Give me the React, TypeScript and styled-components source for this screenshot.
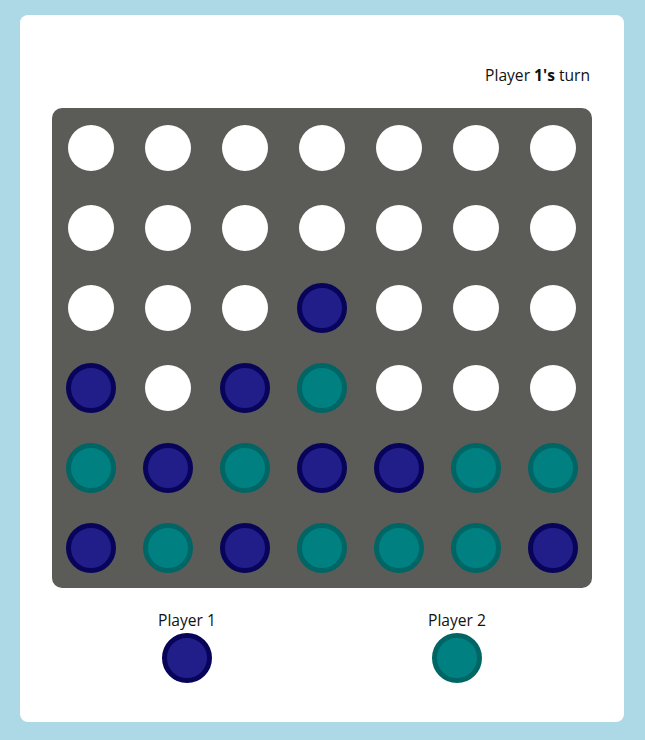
import React from "react";
import styled, { createGlobalStyle } from "styled-components";

const Global = createGlobalStyle`
  html, body { margin: 0; padding: 0; }
  body {
    background: #add8e6;
    font-family: "Open Sans", "Noto Sans", sans-serif;
    color: #111;
  }
`;

const Page = styled.div`
  padding: 15px 21px 18px 20px;
`;

const Card = styled.div`
  width: 604px;
  box-sizing: border-box;
  background: #fff;
  border-radius: 8px;
  padding: 48px 32px 39px;
`;

const Header = styled.div`
  display: flex;
  justify-content: flex-end;
  height: 24px;
  line-height: 24px;
  font-size: 15.6px;
  margin-bottom: 21px;
  padding-right: 2px;
`;

const Bold = styled.b`
  font-weight: 700;
`;

const Board = styled.div`
  width: 540px;
  height: 480px;
  background: #5b5b57;
  border-radius: 10px;
  display: grid;
  grid-template-columns: repeat(7, 1fr);
  grid-template-rows: repeat(6, 1fr);
  place-items: center;
`;

type Kind = "e" | "n" | "t";

const Disc = styled.div<{ $kind: Kind }>`
  box-sizing: border-box;
  border-radius: 50%;
  width: ${(p) => (p.$kind === "e" ? "46px" : "50px")};
  height: ${(p) => (p.$kind === "e" ? "46px" : "50px")};
  background: ${(p) =>
    p.$kind === "e" ? "#ffffff" : p.$kind === "n" ? "#211e8a" : "#008080"};
  border: ${(p) =>
    p.$kind === "e"
      ? "none"
      : p.$kind === "n"
      ? "5px solid #07045a"
      : "5px solid #006565"};
`;

const Players = styled.div`
  width: 540px;
  display: flex;
  justify-content: space-around;
  margin-top: 20px;
`;

const PlayerCol = styled.div`
  width: 270px;
  display: flex;
  flex-direction: column;
  align-items: center;
`;

const PlayerName = styled.div`
  font-size: 15.6px;
  line-height: 24px;
  height: 24px;
  margin-bottom: 1px;
`;

const rows: Kind[][] = [
  ["e", "e", "e", "e", "e", "e", "e"],
  ["e", "e", "e", "e", "e", "e", "e"],
  ["e", "e", "e", "n", "e", "e", "e"],
  ["n", "e", "n", "t", "e", "e", "e"],
  ["t", "n", "t", "n", "n", "t", "t"],
  ["n", "t", "n", "t", "t", "t", "n"],
];

export default function App() {
  return (
    <>
      <Global />
      <Page>
        <Card>
          <Header>
            <span>
              Player <Bold>1's</Bold> turn
            </span>
          </Header>
          <Board>
            {rows.flatMap((row, r) =>
              row.map((k, c) => <Disc key={`${r}-${c}`} $kind={k} />)
            )}
          </Board>
          <Players>
            <PlayerCol>
              <PlayerName>Player 1</PlayerName>
              <Disc $kind="n" />
            </PlayerCol>
            <PlayerCol>
              <PlayerName>Player 2</PlayerName>
              <Disc $kind="t" />
            </PlayerCol>
          </Players>
        </Card>
      </Page>
    </>
  );
}
